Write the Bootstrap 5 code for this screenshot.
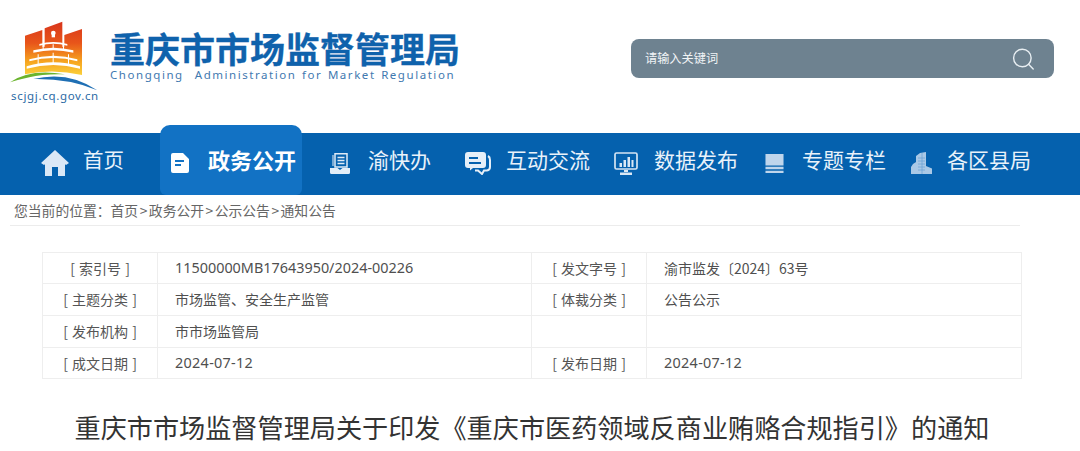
<!DOCTYPE html>
<html lang="zh-CN">
<head>
<meta charset="utf-8">
<title>重庆市市场监督管理局</title>
<link href="https://cdn.jsdelivr.net/npm/bootstrap@5.3.0/dist/css/bootstrap.min.css" rel="stylesheet">
<style>
html,body{height:451px;overflow:hidden;background:#fff}
body{font-family:"Liberation Sans","Noto Sans CJK SC",sans-serif;color:#555}
.site-head{height:133px}
.logo-box{width:110px;padding-top:15px}
.logo-box svg{display:block}
.logo-url{font:11.5px/12px "Noto Sans","Noto Sans CJK SC",sans-serif;letter-spacing:.68px;color:#2b6aa5;padding-left:11px;white-space:nowrap}
.brand-box{padding-top:30px}
.brand-cn{font:700 35px/36px "Noto Sans CJK SC",sans-serif;color:#0f62ac;white-space:nowrap;-webkit-text-stroke:.3px #0f62ac}
.brand-en{font:11.5px/14px "Noto Sans",sans-serif;letter-spacing:1.55px;color:#3f79b0;white-space:nowrap;word-spacing:1px;margin-top:2px}
.search-box{width:423px;height:39px;margin-top:39px;margin-right:26px;background:#6e8290;border-radius:8px;padding:0 19px 0 14px}
.search-input{background:transparent;border:0;padding:0;font:12.2px/39px "Noto Sans CJK SC",sans-serif;color:#fff;box-shadow:none}
.search-input::placeholder{color:#f1f4f6;opacity:1}
.search-input:focus{background:transparent;color:#fff;box-shadow:none}
.main-nav{height:62px;background:#0561ae;padding-left:41px}
.nav-entry{display:flex;align-items:center;height:62px;padding-bottom:2px;color:#e9f2fa;text-decoration:none;font:21px/28px "Noto Sans CJK SC",sans-serif;white-space:nowrap}
.nav-entry svg{flex:none}
.nav-entry span{padding-bottom:8px}
.nav-home{font-size:20.5px;gap:14px}
.nav-active{height:70px;margin-top:-8px;margin-left:36px;width:142px;padding:8px 0 2px 11px;gap:19px;background:#1272c4;border-radius:10px 10px 6px 6px;color:#fff;font-weight:700;font-size:22px}
.nav-yu{margin-left:28px;gap:18px}
.nav-hd{margin-left:34px;gap:15px}
.nav-sj{margin-left:24px;gap:16px}
.nav-zt{margin-left:27px;gap:18px}
.nav-gq{margin-left:25px;gap:15px}
.crumb-line{margin:0 60px 0 10px;height:31px;padding-left:4px;border-bottom:1px solid #ececec;font:13.8px/31px "Noto Sans CJK SC",sans-serif;color:#666;white-space:nowrap}
.crumb-sep{margin:0 1.5px}
.meta-wrap{margin:26px 59px 0 42px}
.meta-table{table-layout:fixed;width:979px;margin:0;font:14px/20px "Noto Sans CJK SC",sans-serif;--bs-table-color:#4f4f4f;--bs-table-border-color:#eeeeee;color:#4f4f4f}
.meta-table td{padding:0 0 0 17px;vertical-align:middle;border:1px solid #eee}
.meta-table .row-short td{height:31px}
.meta-table .row-tall td{height:32px;padding-bottom:2px}
.meta-table td.lbl{padding-left:0;padding-right:0;text-align:center;color:#555;word-spacing:1px}
.meta-table td.num{font:14.4px/20px "Noto Sans","Noto Sans CJK SC",sans-serif}
.meta-table td.date{letter-spacing:.3px}
.doc-title{margin:31px 0 0;padding-left:74.5px;font:26.15px/34px "Noto Sans CJK SC",sans-serif;color:#333;white-space:nowrap}
</style>
</head>
<body>
<header class="site-head d-flex align-items-start">
  <div class="logo-box">
    <svg width="110" height="75" viewBox="0 0 330 225" aria-hidden="true">
      <defs>
        <linearGradient id="tower" gradientUnits="userSpaceOnUse" x1="0" y1="20" x2="0" y2="180">
          <stop offset="0" stop-color="#d8351c"/><stop offset=".4" stop-color="#e8551a"/><stop offset=".75" stop-color="#f6a520"/><stop offset="1" stop-color="#fbd03a"/>
        </linearGradient>
      </defs>
      <path fill="url(#tower)" d="M75 62 127 45V100H75Z"/>
      <path fill="url(#tower)" d="M134 40 187 20V100H134Z"/>
      <path fill="url(#tower)" d="M193 60 246 42V100H193Z"/>
      <path fill="url(#tower)" d="M75 95H246V180Q160 160 75 178Z"/>
      <circle cx="160" cy="54" r="7" fill="#fff"/><rect x="155" y="54" width="10" height="13" fill="#fff"/>
      <path d="M118 87Q160 75 202 87V92Q160 81 118 92Z" fill="#fff"/>
      <path d="M100 106Q160 90 220 106V113Q160 98 100 113Z" fill="#fff"/>
      <path d="M128 92H131V105H128ZM158 88H161V100H158ZM189 92H192V105H189Z" fill="#fff"/>
      <path d="M88 133Q160 112 232 133V139Q160 119 88 139Z" fill="#fff"/>
      <path d="M80 154Q160 130 240 154V161Q160 139 80 161Z" fill="#fff"/>
      <path d="M113 118H116V150H113ZM158 113H161V145H158ZM204 118H207V150H204Z" fill="#fff"/>
      <path d="M30 202Q90 160 195 178 130 176 88 187 56 194 30 202Z" fill="#6ab42d"/>
      <path d="M100 192Q205 166 292 226 210 190 100 192Z" fill="#1f6fb4"/>
    </svg>
    <div class="logo-url">scjgj.cq.gov.cn</div>
  </div>
  <div class="brand-box">
    <div class="brand-cn">重庆市市场监督管理局</div>
    <div class="brand-en">Chongqing &nbsp;Administration for Market Regulation</div>
  </div>
  <form class="search-box d-flex align-items-center ms-auto" onsubmit="return false">
    <input class="search-input form-control" type="text" placeholder="请输入关键词" aria-label="搜索">
    <svg class="flex-none" width="24" height="24" viewBox="0 0 24 24" fill="none" stroke="#e8eef2" stroke-width="1.5" aria-hidden="true"><circle cx="11" cy="11" r="9.3"/><path d="M17.6 17.6 22.5 22.5" stroke-linecap="round"/></svg>
  </form>
</header>

<nav class="main-nav d-flex align-items-start">
  <a class="nav-entry nav-home" href="#">
    <svg width="28" height="26" viewBox="0 0 28 26" aria-hidden="true"><path fill="#dbe8f6" d="M14 0 28 13 25 15 24 14.200V26H17V17H11V26H4V14.200L3 15 0 13Z"/></svg>
    <span>首页</span>
  </a>
  <a class="nav-entry nav-active" href="#">
    <svg width="18" height="20" viewBox="0 0 18 20" aria-hidden="true"><path fill="#fff" fill-rule="evenodd" d="M2 0H12L18 6V18A2 2 0 0 1 16 20H2A2 2 0 0 1 0 18V2A2 2 0 0 1 2 0ZM4 7V9H13V7ZM4 11V13H10V11Z"/></svg>
    <span>政务公开</span>
  </a>
  <a class="nav-entry nav-yu" href="#">
    <svg width="20" height="21" viewBox="0 0 20 21" aria-hidden="true"><path fill="none" stroke="#d5e4f3" stroke-width="1.100" d="M3 2V13"/><path fill="none" stroke="#dfeaf6" stroke-width="1.500" d="M5 .8H17V14H5Z"/><path stroke="#dfeaf6" stroke-width="1.400" d="M7.500 4.500H14.500M7.500 7.500H14.500M7.500 10.500H14.500"/><path fill="#e3edf8" d="M0 15H7.500L10 17 12.500 15H20V19.500A1.500 1.500 0 0 1 18.500 21H1.500A1.500 1.500 0 0 1 0 19.500Z"/></svg>
    <span>渝快办</span>
  </a>
  <a class="nav-entry nav-hd" href="#">
    <svg width="26" height="23" viewBox="0 0 26 23" aria-hidden="true"><path fill="#e6eff8" d="M3 0H18A3 3 0 0 1 21 3V13A3 3 0 0 1 18 16H8L5 18.500V16H3A3 3 0 0 1 0 13V3A3 3 0 0 1 3 0Z"/><path stroke="#0561ae" stroke-width="2" d="M4 6H13M4 11H16"/><path fill="none" stroke="#e6eff8" stroke-width="2" d="M23 4Q25 5 25 8V15Q25 18 22 18.500H19L17 22 13 18.500H10"/></svg>
    <span>互动交流</span>
  </a>
  <a class="nav-entry nav-sj" href="#">
    <svg width="24" height="23" viewBox="0 0 24 23" aria-hidden="true"><rect x="1" y="1" width="22" height="16" rx="1.500" fill="none" stroke="#d5e4f3" stroke-width="1.700"/><path fill="#dbe8f5" d="M5.500 11H8V15H5.500ZM9.500 8H12V15H9.500ZM13.500 5H16V15H13.500ZM17.500 8H19.500V15H17.500ZM10 18H14V20H10ZM6 20.500H18V23H6Z"/></svg>
    <span>数据发布</span>
  </a>
  <a class="nav-entry nav-zt" href="#">
    <svg width="19" height="19" viewBox="0 0 19 20" aria-hidden="true"><path fill="#bfd5ec" d="M0 0H19V12H0ZM0 13.500H19V16H0ZM0 17.500H19V20H0Z"/></svg>
    <span>专题专栏</span>
  </a>
  <a class="nav-entry nav-gq" href="#">
    <svg width="21" height="22" viewBox="0 0 21 22" aria-hidden="true"><path fill="#a9c8e6" d="M5 4 9 1 15 0V22H5ZM15 14 21 16.500V22H15ZM2 12 5 10V22H0V15Z"/><path stroke="#6fa3d4" stroke-width=".8" d="M7 6H14M7 9H14M7 12H14M7 15H14M7 18H14M11 1V22"/></svg>
    <span>各区县局</span>
  </a>
</nav>

<div class="crumb-line">您当前的位置：首页<span class="crumb-sep">&gt;</span>政务公开<span class="crumb-sep">&gt;</span>公示公告<span class="crumb-sep">&gt;</span>通知公告</div>

<main>
  <div class="meta-wrap">
    <table class="meta-table table table-bordered">
      <colgroup><col style="width:115px"><col style="width:374px"><col style="width:115px"><col style="width:375px"></colgroup>
      <tbody>
        <tr class="row-short"><td class="lbl">[ 索引号 ]</td><td class="num">11500000MB17643950/2024-00226</td><td class="lbl">[ 发文字号 ]</td><td>渝市监发〔2024〕63号</td></tr>
        <tr class="row-tall"><td class="lbl">[ 主题分类 ]</td><td>市场监管、安全生产监管</td><td class="lbl">[ 体裁分类 ]</td><td>公告公示</td></tr>
        <tr class="row-tall"><td class="lbl">[ 发布机构 ]</td><td>市市场监管局</td><td class="lbl"></td><td></td></tr>
        <tr class="row-short"><td class="lbl">[ 成文日期 ]</td><td class="num date">2024-07-12</td><td class="lbl">[ 发布日期 ]</td><td class="num date">2024-07-12</td></tr>
      </tbody>
    </table>
  </div>
  <h1 class="doc-title">重庆市市场监督管理局关于印发《重庆市医药领域反商业贿赂合规指引》的通知</h1>
</main>
<script src="https://cdn.jsdelivr.net/npm/bootstrap@5.3.0/dist/js/bootstrap.bundle.min.js"></script>
</body>
</html>
